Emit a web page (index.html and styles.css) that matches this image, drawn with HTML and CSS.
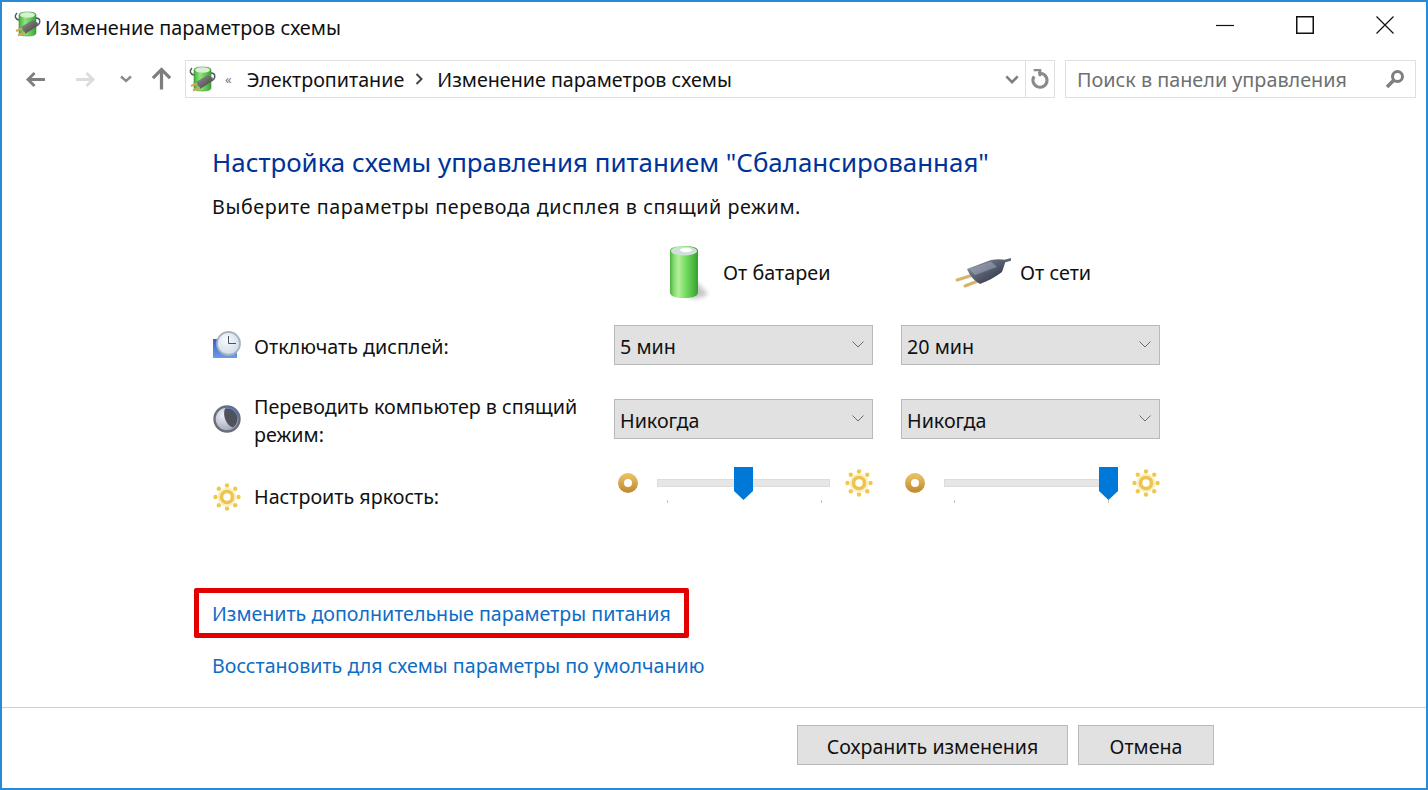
FILE: index.html
```html
<!DOCTYPE html>
<html lang="ru">
<head>
<meta charset="utf-8">
<title>Изменение параметров схемы</title>
<link rel="stylesheet" href="styles.css">
</head>
<body>
<svg class="defs" width="0" height="0" aria-hidden="true">
  <defs>
    <linearGradient id="batG" x1="0" x2="1" y1="0" y2="0">
      <stop offset="0" stop-color="#4cae42"/><stop offset=".12" stop-color="#7ed868"/><stop offset=".3" stop-color="#b4f09c"/><stop offset=".58" stop-color="#72da5c"/><stop offset="1" stop-color="#34a032"/>
    </linearGradient>
    <linearGradient id="smallBat" x1="0" x2="1" y1="0" y2="0">
      <stop offset="0" stop-color="#3fae3a"/><stop offset=".35" stop-color="#8fe67a"/><stop offset="1" stop-color="#38a535"/>
    </linearGradient>
    <linearGradient id="plugG" x1="0" x2="1" y1="0" y2="1">
      <stop offset="0" stop-color="#9aa0b2"/><stop offset=".5" stop-color="#555c6e"/><stop offset="1" stop-color="#262a36"/>
    </linearGradient>
    <linearGradient id="plugSmall" x1="0" x2="1" y1="0" y2="1">
      <stop offset="0" stop-color="#9a9a9a"/><stop offset="1" stop-color="#383838"/>
    </linearGradient>
    <linearGradient id="gold" x1="0" x2="0" y1="0" y2="1">
      <stop offset="0" stop-color="#e8bd62"/><stop offset="1" stop-color="#c58f35"/>
    </linearGradient>
    <radialGradient id="moonG" cx=".35" cy=".35" r=".8">
      <stop offset="0" stop-color="#eef0f8"/><stop offset="1" stop-color="#8f95ad"/>
    </radialGradient>
    <radialGradient id="clockG" cx=".4" cy=".35" r=".8">
      <stop offset="0" stop-color="#f8fbfd"/><stop offset="1" stop-color="#c6d5e2"/>
    </radialGradient>
    <linearGradient id="screenG" x1="0" x2="0" y1="0" y2="1">
      <stop offset="0" stop-color="#2d62d0"/><stop offset="1" stop-color="#6f9ae6"/>
    </linearGradient>
    <symbol id="power" viewBox="0 0 28 28">
      <path d="M4 3 C1 6 2 9 6 10" fill="none" stroke="#4c5b66" stroke-width="1.5"/>
      <path d="M6 5 Q6 2 14.500 2 Q23 2 23 5 L23 23 Q23 26 14.500 26 Q6 26 6 23 Z" fill="url(#smallBat)" stroke="#3b8f34" stroke-width=".6"/>
      <ellipse cx="14.500" cy="5" rx="7.500" ry="2.800" fill="#d9efd3"/>
      <path d="M23 8 C28 8 28 14 23 16" fill="none" stroke="#4c5b66" stroke-width="1.500"/>
      <path d="M8 17 L20 10 L25 13 L23 17 L12 24 Z" fill="url(#plugSmall)"/>
      <path d="M9 18.500 L3 21 M12 22.500 L5 25.500" stroke="#d0a85a" stroke-width="2"/>
    </symbol>
    <symbol id="sun" viewBox="0 0 28 28">
      <g fill="#efc94f">
        <circle cx="14" cy="2.500" r="2.200"/><circle cx="14" cy="25.500" r="2.200"/><circle cx="2.500" cy="14" r="2.200"/><circle cx="25.500" cy="14" r="2.200"/>
        <circle cx="5.800" cy="5.800" r="2.200"/><circle cx="22.200" cy="5.800" r="2.200"/><circle cx="5.800" cy="22.200" r="2.200"/><circle cx="22.200" cy="22.200" r="2.200"/>
      </g>
      <circle cx="14" cy="14" r="9.500" fill="#fbf0c0"/>
      <circle cx="14" cy="14" r="5.500" fill="#fffef8" stroke="#ecc452" stroke-width="3.600"/>
    </symbol>
    <symbol id="dim" viewBox="0 0 22 22">
      <circle cx="11" cy="11" r="7" fill="#fff" stroke="url(#gold)" stroke-width="6"/>
    </symbol>
    <symbol id="chev" viewBox="0 0 12 7">
      <path d="M.5 .5 L6 6 L11.5 .5" fill="none" stroke="#6d6d6d" stroke-width="1"/>
    </symbol>
    <symbol id="slider-thumb" viewBox="0 0 19 34">
      <path d="M0 0 H19 V24 L9.5 33 L0 24 Z" fill="#0078d7"/>
    </symbol>
  </defs>
</svg>

<main class="window">
  <header class="titlebar">
    <svg class="title-icon"><use href="#power"/></svg>
    <span class="title-text">Изменение параметров схемы</span>
    <div class="caption-buttons">
      <svg class="cap" viewBox="0 0 18 18"><path d="M0 9.5 H18" stroke="#111" stroke-width="1.2"/></svg>
      <svg class="cap" viewBox="0 0 18 18"><rect x=".75" y=".75" width="16.5" height="16.5" fill="none" stroke="#111" stroke-width="1.5"/></svg>
      <svg class="cap" viewBox="0 0 18 18"><path d="M.5 .5 L17.5 17.5 M17.5 .5 L.5 17.5" stroke="#111" stroke-width="1.2"/></svg>
    </div>
  </header>

  <nav class="navbar">
    <div class="nav-buttons">
      <svg class="nav-arrow" viewBox="0 0 22 18"><path d="M10 2 L3 9 L10 16 M3 9 H21" fill="none" stroke="#7e7e7e" stroke-width="3"/></svg>
      <svg class="nav-arrow nav-fwd" viewBox="0 0 22 18"><path d="M12 2 L19 9 L12 16 M19 9 H1" fill="none" stroke="#dcdcdc" stroke-width="3"/></svg>
      <svg class="nav-drop" viewBox="0 0 12 8"><path d="M1 1.5 L6 6 L11 1.5" fill="none" stroke="#8a8a8a" stroke-width="2.4"/></svg>
      <svg class="nav-up" viewBox="0 0 22 24"><path d="M2 11 L11 2 L20 11 M11 2 V23" fill="none" stroke="#7e7e7e" stroke-width="3.4"/></svg>
    </div>
    <div class="address">
      <svg class="addr-icon"><use href="#power"/></svg>
      <span class="crumb-more">«</span>
      <span class="crumb">Электропитание</span>
      <svg class="crumb-sep" viewBox="0 0 8 12"><path d="M1.5 1 L6.5 6 L1.5 11" fill="none" stroke="#444" stroke-width="2"/></svg>
      <span class="crumb">Изменение параметров схемы</span>
      <svg class="addr-drop" viewBox="0 0 16 10"><path d="M1.5 1.5 L8 8 L14.500 1.500" fill="none" stroke="#7e7e7e" stroke-width="3"/></svg>
      <span class="addr-refresh">
        <svg class="refresh-icon" viewBox="0 0 20 22"><path d="M8 4.800 A7.800 7.800 0 1 1 3.500 8" fill="none" stroke="#8a8a8a" stroke-width="3.400"/><path d="M3 1 H10 V8" fill="none" stroke="#8a8a8a" stroke-width="3"/></svg>
      </span>
    </div>
    <div class="search">
      <span class="search-text">Поиск в панели управления</span>
      <svg class="search-icon" viewBox="0 0 20 20"><circle cx="12.500" cy="7.500" r="5" fill="none" stroke="#7e7e7e" stroke-width="3"/><path d="M9 11 L2 18" stroke="#7e7e7e" stroke-width="3.600"/></svg>
    </div>
  </nav>

  <section class="content">
    <h1 class="heading">Настройка схемы управления питанием "Сбалансированная"</h1>
    <p class="subtitle">Выберите параметры перевода дисплея в спящий режим.</p>

    <div class="settings">
      <div class="col-head col-battery">
        <svg class="big-battery" viewBox="0 0 44 56">
          <defs><filter id="soft"><feGaussianBlur stdDeviation="2"/></filter></defs>
          <path d="M28 36 L40 49 Q34 54 22 54 Z" fill="#9a9a9a" opacity=".55" filter="url(#soft)"/>
          <path d="M2 6 Q2 1 16 1 Q30 1 30 6 V47 Q30 53 16 53 Q2 53 2 47 Z" fill="url(#batG)"/>
          <ellipse cx="16" cy="6" rx="13" ry="4.500" fill="#cfe0d8"/>
          <ellipse cx="18" cy="5" rx="6" ry="2.200" fill="#fff"/>
        </svg>
        <span>От батареи</span>
      </div>
      <div class="col-head col-plug">
        <svg class="big-plug" viewBox="0 0 56 30">
          <path d="M18 17 L2 22" stroke="#d6b36a" stroke-width="3" stroke-linecap="round"/>
          <path d="M28 21 L10 28" stroke="#d6b36a" stroke-width="3" stroke-linecap="round"/>
          <path d="M12 11 L36 2 Q44 .5 51 2 L47 14 Q38 21 25 26 Q16 21 12 11 Z" fill="url(#plugG)"/>
          <path d="M14 11 L36 3.500 L42 9 L20 17 Z" fill="#a3a9ba" opacity=".55"/>
          <path d="M50 3 L55.500 1.500" stroke="#5c6372" stroke-width="2.600" stroke-linecap="round"/>
        </svg>
        <span>От сети</span>
      </div>

      <div class="row-label">
        <svg class="row-icon" viewBox="0 0 28 28">
          <rect x="0" y="8" width="24" height="19" fill="url(#screenG)"/>
          <circle cx="15.500" cy="12.500" r="11.500" fill="url(#clockG)" stroke="#a5b3bf" stroke-width="1.800"/>
          <path d="M15.500 5 V12.500 H23" fill="none" stroke="#46525c" stroke-width="1"/>
        </svg>
        <span>Отключать дисплей:</span>
      </div>
      <div class="combo"><span>5 мин</span><svg class="combo-chev"><use href="#chev"/></svg></div>
      <div class="combo"><span>20 мин</span><svg class="combo-chev"><use href="#chev"/></svg></div>

      <div class="row-label">
        <svg class="row-icon" viewBox="0 0 28 28">
          <circle cx="14" cy="14" r="12.500" fill="url(#moonG)" stroke="#6a6e7a" stroke-width="2.400"/>
          <path d="M12 3.500 A10.500 10.500 0 0 1 20 22.500 C14 21 9 11 12 3.500 Z" fill="#4f5259"/>
          <path d="M13 3 A11 11 0 0 1 25 13" fill="none" stroke="#4c78d8" stroke-width="1.200"/>
        </svg>
        <span>Переводить компьютер в спящий режим:</span>
      </div>
      <div class="combo"><span>Никогда</span><svg class="combo-chev"><use href="#chev"/></svg></div>
      <div class="combo"><span>Никогда</span><svg class="combo-chev"><use href="#chev"/></svg></div>

      <div class="row-label row-bright">
        <svg class="row-icon"><use href="#sun"/></svg>
        <span>Настроить яркость:</span>
      </div>
      <div class="brightness">
        <svg class="dim-icon"><use href="#dim"/></svg>
        <div class="track">
          <span class="tick tick-start"></span><span class="tick tick-end"></span>
          <svg class="thumb thumb-mid"><use href="#slider-thumb"/></svg>
        </div>
        <svg class="sun-icon"><use href="#sun"/></svg>
      </div>
      <div class="brightness">
        <svg class="dim-icon"><use href="#dim"/></svg>
        <div class="track">
          <span class="tick tick-start"></span><span class="tick tick-end"></span>
          <svg class="thumb thumb-max"><use href="#slider-thumb"/></svg>
        </div>
        <svg class="sun-icon"><use href="#sun"/></svg>
      </div>
    </div>

    <div class="links">
      <a class="link link-boxed" href="#">Изменить дополнительные параметры питания</a>
      <a class="link" href="#">Восстановить для схемы параметры по умолчанию</a>
    </div>
  </section>

  <footer class="footer">
    <button class="btn btn-save" type="button">Сохранить изменения</button>
    <button class="btn btn-cancel" type="button">Отмена</button>
  </footer>
</main>
</body>
</html>
```

FILE: styles.css
```css
* { box-sizing: border-box; }
html, body { margin: 0; height: 100%; overflow: hidden; }
body { font-family: "Noto Sans", "Open Sans", sans-serif; color: #111; background: #fff; }
.defs { position: absolute; }

.window {
  width: 1428px; height: 790px;
  border: 2px solid #2b8ad6;
  display: flex; flex-direction: column;
  background: #fff;
}

.titlebar { height: 50px; display: flex; align-items: center; padding: 0 0 0 11px; flex: none; }
.title-icon { width: 28px; height: 28px; margin: 0 4px 6px 0; }
.title-text { font-size: 19.8px; }
.caption-buttons { margin-left: auto; display: flex; gap: 62px; padding: 0 32px 4px 0; }
.cap { width: 18px; height: 18px; display: block; }

.navbar { height: 38px; margin-top: 8px; flex: none; display: flex; align-items: stretch; padding-right: 10px; }
.nav-buttons { width: 183px; display: flex; align-items: center; padding-left: 23px; }
.nav-arrow { width: 21px; height: 17px; }
.nav-fwd { margin-left: 29px; }
.nav-drop { width: 12px; height: 8px; margin-left: 24px; }
.nav-up { width: 21px; height: 24px; margin-left: 19px; }

.address { width: 870px; border: 1px solid #e0e0e0; display: flex; align-items: center; padding-left: 2px; }
.addr-icon { width: 28px; height: 28px; }
.crumb-more { font-size: 13px; color: #777; margin-left: 9px; margin-right: 15px; }
.crumb { font-size: 19.7px; }
.crumb-sep { width: 8px; height: 12px; margin: 0 14px 0 11px; }
.addr-drop { width: 14px; height: 9px; margin-left: auto; margin-right: 6px; }
.addr-refresh { width: 29px; height: 100%; border-left: 1px solid #e0e0e0; display: flex; align-items: center; justify-content: center; }
.refresh-icon { width: 18px; height: 20px; }

.search { width: 351px; margin-left: 10px; border: 1px solid #e0e0e0; display: flex; align-items: center; padding: 0 10px 0 11px; }
.search-text { font-size: 19.8px; color: #6f6f6f; }
.search-icon { width: 20px; height: 20px; margin-left: auto; }

.content { flex: 1; padding: 48px 0 0 210px; }
.heading { margin: 0; font-size: 25.9px; font-weight: 400; color: #003399; line-height: 32px; }
.subtitle { margin: 17px 0 0; font-size: 19.7px; letter-spacing: .58px; line-height: 24px; }

.settings {
  display: grid;
  grid-template-columns: 374px 259px 259px;
  column-gap: 28px;
  grid-template-rows: 36px 40px 40px 48px;
  row-gap: 34px;
  margin-top: 36px;
  align-items: center;
}
.col-head { font-size: 19.8px; display: flex; align-items: center; height: 36px; padding-bottom: 2px; }
.col-battery { grid-column: 2; padding-left: 54px; gap: 11px; }
.col-plug { grid-column: 3; padding-left: 54px; gap: 9px; }
.big-battery { width: 44px; height: 56px; flex: none; margin-top: 2px; }
.big-plug { width: 56px; height: 30px; flex: none; margin-top: 2px; }

.row-label { display: flex; align-items: center; font-size: 19.7px; line-height: 28px; }
.row-label span { margin: 3px 0 0 13px; }
.row-bright span { margin-top: 0; }
.row-icon { width: 28px; height: 28px; flex: none; margin-left: 1px; }

.combo {
  height: 40px; background: #e1e1e1; border: 1px solid #b9b9b9;
  display: flex; align-items: center; justify-content: space-between;
  padding: 2px 8px 0 5px; font-size: 19.7px;
}
.combo-chev { width: 12px; height: 7px; margin-bottom: 4px; }

.brightness { display: flex; align-items: center; height: 19px; align-self: start; }
.dim-icon { width: 22px; height: 22px; margin-left: 3px; flex: none; }
.sun-icon { width: 28px; height: 28px; flex: none; margin-left: 15px; }
.track { position: relative; height: 8px; width: 173px; margin-left: 18px; background: #e6e6e6; border: 1px solid #dcdcdc; flex: none; }
.thumb { position: absolute; top: -13px; width: 19px; height: 34px; }
.thumb-mid { left: 76px; }
.thumb-max { left: 154px; }
.tick { position: absolute; top: 20px; width: 1px; height: 3px; background: #c4c4c4; }
.tick-start { left: 9px; }
.tick-end { left: 163px; }

.links { margin-top: 80px; display: flex; flex-direction: column; align-items: flex-start; }
.link { color: #0f6cc4; text-decoration: none; font-size: 19.63px; line-height: 26px; }
.link-boxed { position: relative; margin-bottom: 26px; }
.link-boxed::before {
  content: ""; position: absolute; left: -18px; right: -18px; top: -13px; bottom: -11px;
  border: 5px solid #e30000; border-radius: 2px;
}

.footer { height: 81px; flex: none; border-top: 1px solid #d0d0d0; display: flex; justify-content: flex-end; padding: 17px 212px 0 0; gap: 10px; }
.btn { height: 40px; background: #e1e1e1; border: 1px solid #b9b9b9; font: inherit; font-size: 19.6px; color: #111; padding: 2px 0 0; }
.btn-save { width: 271px; }
.btn-cancel { width: 136px; }
```
